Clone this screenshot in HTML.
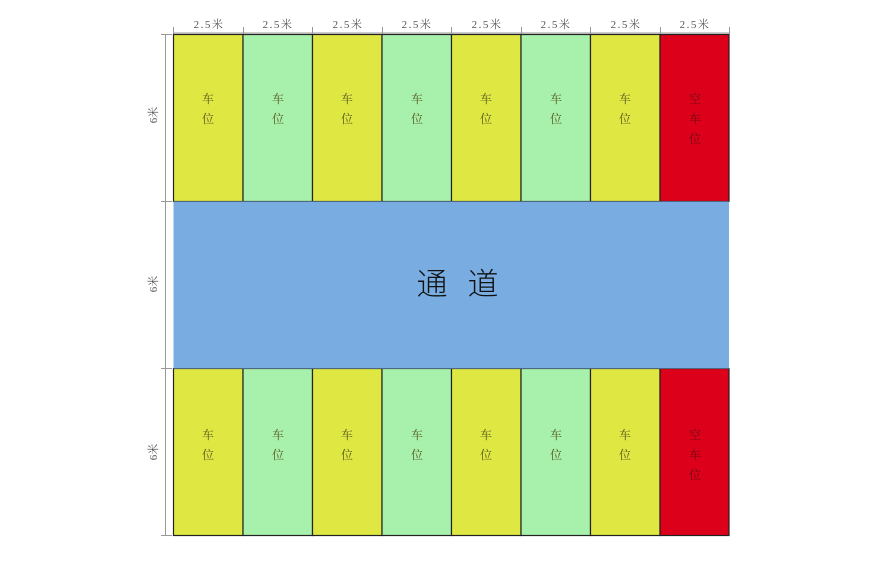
<!DOCTYPE html>
<html><head><meta charset="utf-8"><style>
html,body{margin:0;padding:0;background:#fff;width:892px;height:564px;overflow:hidden}
svg text{font-family:"Liberation Serif","Noto Serif CJK SC",serif}
</style></head><body>
<svg width="892" height="564" xmlns="http://www.w3.org/2000/svg">
<g id="cells" stroke="#222" stroke-width="1.2">
<rect x="173.5" y="34.5" width="69.5" height="167" fill="#dfe843"/>
<rect x="243" y="34.5" width="69.5" height="167" fill="#a8f1ad"/>
<rect x="312.5" y="34.5" width="69.5" height="167" fill="#dfe843"/>
<rect x="382" y="34.5" width="69.5" height="167" fill="#a8f1ad"/>
<rect x="451.5" y="34.5" width="69.5" height="167" fill="#dfe843"/>
<rect x="521" y="34.5" width="69.5" height="167" fill="#a8f1ad"/>
<rect x="590.5" y="34.5" width="69.5" height="167" fill="#dfe843"/>
<rect x="660" y="34.5" width="69" height="167" fill="#dd001b"/>
<rect x="173.5" y="368.5" width="69.5" height="167" fill="#dfe843"/>
<rect x="243" y="368.5" width="69.5" height="167" fill="#a8f1ad"/>
<rect x="312.5" y="368.5" width="69.5" height="167" fill="#dfe843"/>
<rect x="382" y="368.5" width="69.5" height="167" fill="#a8f1ad"/>
<rect x="451.5" y="368.5" width="69.5" height="167" fill="#dfe843"/>
<rect x="521" y="368.5" width="69.5" height="167" fill="#a8f1ad"/>
<rect x="590.5" y="368.5" width="69.5" height="167" fill="#dfe843"/>
<rect x="660" y="368.5" width="69" height="167" fill="#dd001b"/>
</g>
<rect x="173.5" y="201.5" width="555.5" height="167" fill="#79ade2"/>
<text x="432" y="295" font-size="31" text-anchor="middle" fill="#111" style="font-family:'Noto Sans CJK SC',sans-serif;font-weight:300">通</text>
<text x="483" y="295" font-size="31" text-anchor="middle" fill="#111" style="font-family:'Noto Sans CJK SC',sans-serif;font-weight:300">道</text>
<line x1="173" y1="33" x2="729" y2="33" stroke="#999" stroke-width="1"/>
<g stroke="#999">
<line x1="173.5" y1="27" x2="173.5" y2="34"/><line x1="243.5" y1="27" x2="243.5" y2="34"/><line x1="312.5" y1="27" x2="312.5" y2="34"/><line x1="382.5" y1="27" x2="382.5" y2="34"/><line x1="451.5" y1="27" x2="451.5" y2="34"/><line x1="521.5" y1="27" x2="521.5" y2="34"/><line x1="590.5" y1="27" x2="590.5" y2="34"/><line x1="660.5" y1="27" x2="660.5" y2="34"/><line x1="729.5" y1="27" x2="729.5" y2="34"/>
<line x1="165.5" y1="34" x2="165.5" y2="535"/>
<line x1="161" y1="34.5" x2="172" y2="34.5"/><line x1="161" y1="201.5" x2="172" y2="201.5"/><line x1="161" y1="368.5" x2="172" y2="368.5"/><line x1="161" y1="535.5" x2="172" y2="535.5"/>
</g>
<g font-size="11" fill="#555" text-anchor="middle" letter-spacing="1.5">
<text x="209" y="28">2.5米</text><text x="278" y="28">2.5米</text><text x="348" y="28">2.5米</text><text x="417" y="28">2.5米</text><text x="487" y="28">2.5米</text><text x="556" y="28">2.5米</text><text x="626" y="28">2.5米</text><text x="695" y="28">2.5米</text>
</g>
<g font-size="11" fill="#555" text-anchor="middle">
<text transform="translate(157,115) rotate(-90)">6米</text>
<text transform="translate(157,284) rotate(-90)">6米</text>
<text transform="translate(157,452) rotate(-90)">6米</text>
</g>
<g font-size="12" fill="#5a5a20" text-anchor="middle" style="font-family:'Noto Sans CJK SC',sans-serif">
<text x="208" y="103">车</text><text x="208" y="123">位</text>
<text x="278" y="103">车</text><text x="278" y="123">位</text>
<text x="347" y="103">车</text><text x="347" y="123">位</text>
<text x="417" y="103">车</text><text x="417" y="123">位</text>
<text x="486" y="103">车</text><text x="486" y="123">位</text>
<text x="556" y="103">车</text><text x="556" y="123">位</text>
<text x="625" y="103">车</text><text x="625" y="123">位</text>
<text x="208" y="439">车</text><text x="208" y="459">位</text>
<text x="278" y="439">车</text><text x="278" y="459">位</text>
<text x="347" y="439">车</text><text x="347" y="459">位</text>
<text x="417" y="439">车</text><text x="417" y="459">位</text>
<text x="486" y="439">车</text><text x="486" y="459">位</text>
<text x="556" y="439">车</text><text x="556" y="459">位</text>
<text x="625" y="439">车</text><text x="625" y="459">位</text>
</g>
<g font-size="12" fill="#6a0a10" text-anchor="middle" style="font-family:'Noto Sans CJK SC',sans-serif">
<text x="695" y="103">空</text><text x="695" y="123">车</text><text x="695" y="143">位</text>
<text x="695" y="439">空</text><text x="695" y="459">车</text><text x="695" y="479">位</text>
</g>
</svg>
</body></html>
